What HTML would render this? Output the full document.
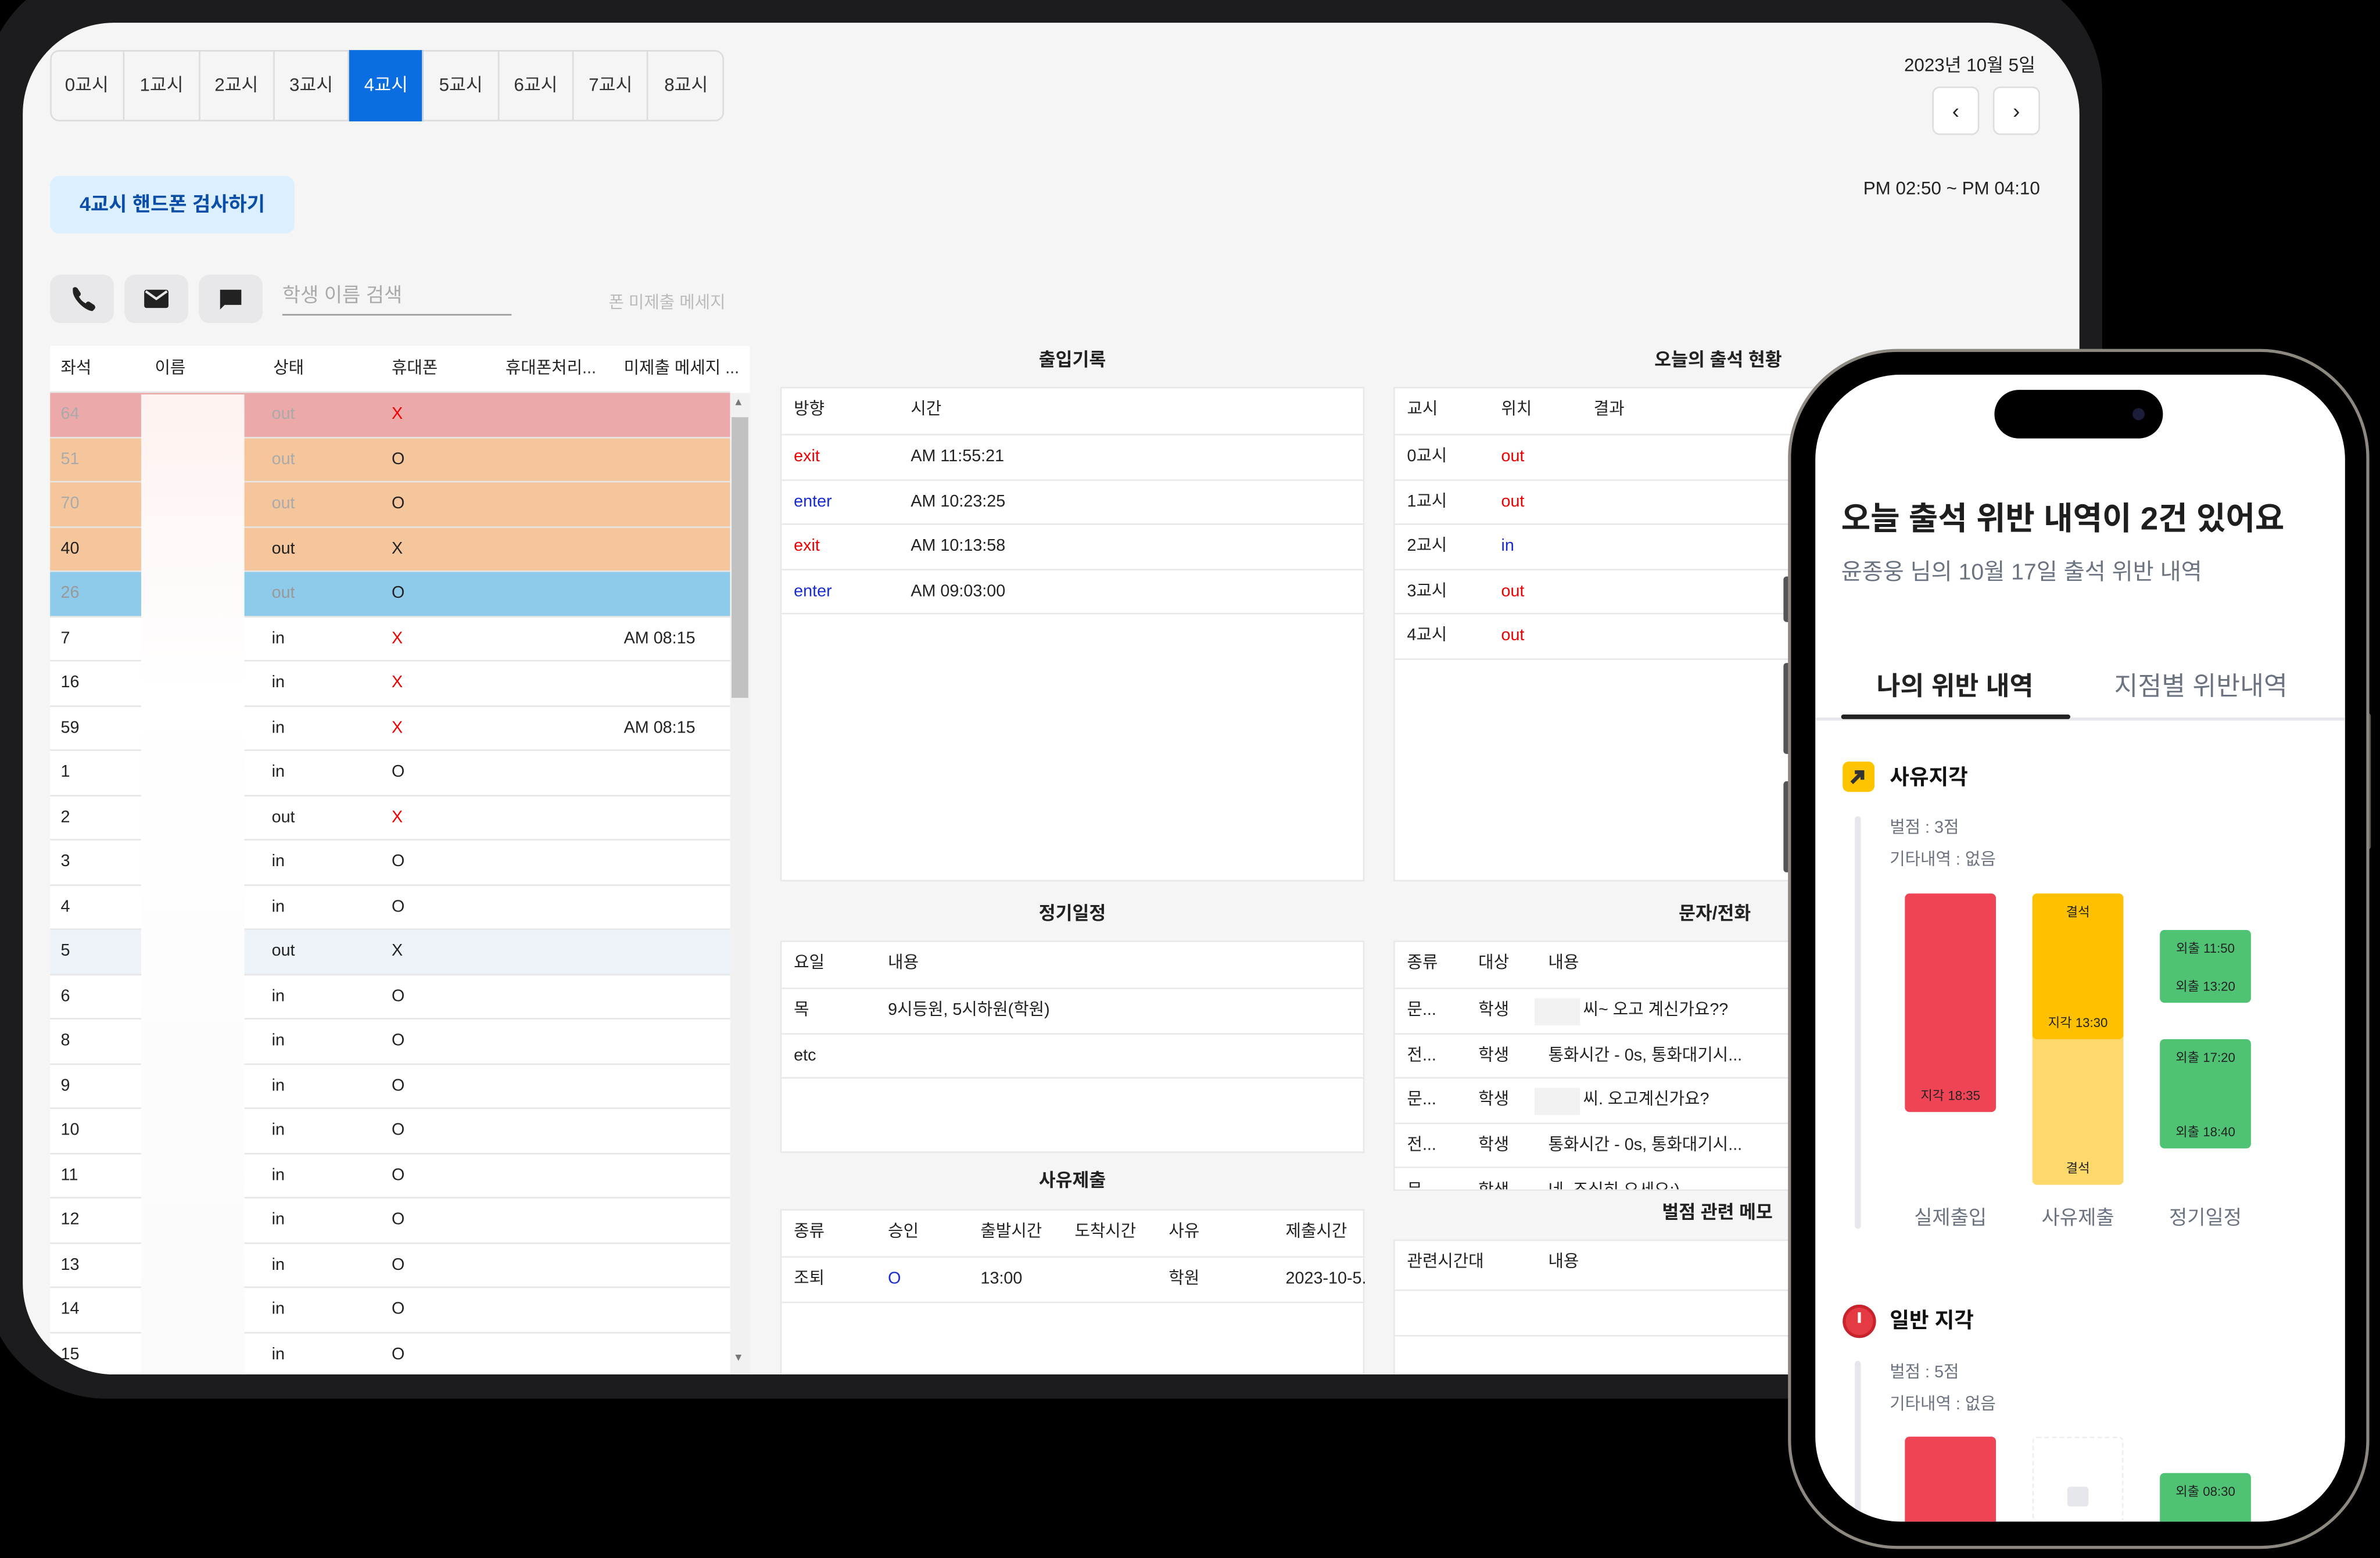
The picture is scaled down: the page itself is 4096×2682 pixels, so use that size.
<!DOCTYPE html>
<html><head><meta charset="utf-8">
<style>
*{margin:0;padding:0;box-sizing:border-box}
html,body{width:4096px;height:2682px;overflow:hidden;background:#000}
#w{position:absolute;left:0;top:0;width:1568px;height:1027px;transform:scale(2.6122,2.6115);transform-origin:0 0;font-family:"Liberation Sans","Noto Sans CJK KR",sans-serif;color:#222;font-size:11px}
.a{position:absolute;white-space:nowrap}
.tab{position:absolute;top:33px;height:47px;width:49.3px;border-right:1px solid #dcdcdc;text-align:center;line-height:47px;font-size:12px;color:#333}
.ib{position:absolute;top:181px;width:42px;height:32px;background:#e8e8eb;border-radius:7px}
.row{position:absolute;left:33px;width:448px;height:29.5px;border-bottom:1px solid #e6e6e6;font-size:11px}
.row span{position:absolute;top:0;line-height:29px}
.pan{position:absolute;background:#fff;border:1px solid #e8e8e8}
.pr{position:absolute;left:0;right:0;height:29.5px;border-bottom:1px solid #e8e8e8;font-size:11px}
.pr span{position:absolute;line-height:29px}
.tt{position:absolute;font-size:12px;font-weight:bold;color:#222;text-align:center}
.r{color:#e00}.b{color:#1a2bd0}
.bar{position:absolute;border-radius:3px;font-size:8.5px;color:#222;text-align:center}
.bar span{position:absolute;left:0;right:0}
</style></head><body><div id="w">
<!-- tablet -->
<div class="a" style="left:-10px;top:-20px;width:1395px;height:942px;background:#1c1c1e;border-radius:80px"></div>
<div class="a" style="left:15px;top:15px;width:1355px;height:891px;background:#f5f5f5;border-radius:60px;overflow:hidden">
<div style="position:absolute;left:-15px;top:-15px;width:1568px;height:1027px">
<div class="a" style="left:33px;top:33px;width:444px;height:47px;border:1px solid #dcdcdc;border-radius:6px;background:#f5f5f5"></div>
<div class="tab" style="left:33px">0교시</div><div class="tab" style="left:82.3px">1교시</div><div class="tab" style="left:131.6px">2교시</div><div class="tab" style="left:180.9px">3교시</div><div class="tab" style="left:230.2px;background:#0a6de0;color:#fff">4교시</div><div class="tab" style="left:279.5px">5교시</div><div class="tab" style="left:328.8px">6교시</div><div class="tab" style="left:378.1px">7교시</div><div class="tab" style="left:427.4px;border:none">8교시</div>
<div class="a" style="right:227px;top:34px;font-size:12px">2023년 10월 5일</div>
<div class="a" style="left:1273px;top:57px;width:31px;height:32px;background:#fff;border:1px solid #ddd;border-radius:5px;text-align:center;line-height:30px;font-size:14px">&#8249;</div>
<div class="a" style="left:1313px;top:57px;width:31px;height:32px;background:#fff;border:1px solid #ddd;border-radius:5px;text-align:center;line-height:30px;font-size:14px">&#8250;</div>
<div class="a" style="left:33px;top:116px;width:161px;height:38px;background:#dcefff;border-radius:6px;color:#0a4ea8;font-weight:bold;font-size:13px;text-align:center;line-height:38px">4교시 핸드폰 검사하기</div>
<div class="a" style="right:224px;top:117px;font-size:12px">PM 02:50 ~ PM 04:10</div>
<div class="ib" style="left:33px"><svg width="42" height="32" viewBox="0 0 42 32"><path d="M15 9c1-1 2-1 3 0l2 3c.5 1 0 2-1 2.5c1 2 2.5 3.5 4.5 4.5c.5-1 1.5-1.5 2.5-1l3 2c1 1 1 2 0 3l-1 1c-5 0-13-8-13-13z" fill="#222"/></svg></div>
<div class="ib" style="left:82px"><svg width="42" height="32" viewBox="0 0 42 32"><rect x="13" y="10" width="16" height="12" rx="1.5" fill="#222"/><path d="M14 11l7 5l7-5" stroke="#e8e8eb" stroke-width="1.6" fill="none"/></svg></div>
<div class="ib" style="left:131px"><svg width="42" height="32" viewBox="0 0 42 32"><path d="M14 10h14v10h-11l-3 3z" fill="#222"/></svg></div>
<div class="a" style="left:186px;top:184px;width:151px;height:24px;border-bottom:1px solid #999;color:#aaa;font-size:13px">학생 이름 검색</div>
<div class="a" style="left:401px;top:191px;color:#bbb;font-size:11px">폰 미제출 메세지</div>
<!-- left table -->
<div class="a" style="left:33px;top:228px;width:461px;height:678px;background:#fff"></div>
<div class="row" style="top:228px;height:31px;background:#fff"><span style="left:7px;line-height:30px">좌석</span><span style="left:69px;line-height:30px">이름</span><span style="left:147px;line-height:30px">상태</span><span style="left:225px;line-height:30px">휴대폰</span><span style="left:300px;line-height:30px">휴대폰처리...</span><span style="left:378px;line-height:30px">미제출 메세지 ...</span></div>
<div class="row" style="top:259px;background:#eba9a9;color:#aaa"><span style="left:7px">64</span><span style="left:146px">out</span><span style="left:225px" class="r">X</span></div>
<div class="row" style="top:288.5px;background:#f5c59b;color:#aaa"><span style="left:7px">51</span><span style="left:146px">out</span><span style="left:225px;color:#222">O</span></div>
<div class="row" style="top:318px;background:#f5c59b;color:#aaa"><span style="left:7px">70</span><span style="left:146px">out</span><span style="left:225px;color:#222">O</span></div>
<div class="row" style="top:347.5px;background:#f5c59b"><span style="left:7px">40</span><span style="left:146px">out</span><span style="left:225px">X</span></div>
<div class="row" style="top:377px;background:#8ecaea;color:#999"><span style="left:7px">26</span><span style="left:146px">out</span><span style="left:225px;color:#222">O</span></div>
<div class="row" style="top:406.5px"><span style="left:7px">7</span><span style="left:146px">in</span><span style="left:225px" class="r">X</span><span style="left:378px">AM 08:15</span></div>
<div class="row" style="top:436px"><span style="left:7px">16</span><span style="left:146px">in</span><span style="left:225px" class="r">X</span></div>
<div class="row" style="top:465.5px"><span style="left:7px">59</span><span style="left:146px">in</span><span style="left:225px" class="r">X</span><span style="left:378px">AM 08:15</span></div>
<div class="row" style="top:495px"><span style="left:7px">1</span><span style="left:146px">in</span><span style="left:225px">O</span></div>
<div class="row" style="top:524.5px"><span style="left:7px">2</span><span style="left:146px">out</span><span style="left:225px" class="r">X</span></div>
<div class="row" style="top:554px"><span style="left:7px">3</span><span style="left:146px">in</span><span style="left:225px">O</span></div>
<div class="row" style="top:583.5px"><span style="left:7px">4</span><span style="left:146px">in</span><span style="left:225px">O</span></div>
<div class="row" style="top:613px;background:#eef3fa"><span style="left:7px">5</span><span style="left:146px">out</span><span style="left:225px">X</span></div>
<div class="row" style="top:642.5px"><span style="left:7px">6</span><span style="left:146px">in</span><span style="left:225px">O</span></div>
<div class="row" style="top:672px"><span style="left:7px">8</span><span style="left:146px">in</span><span style="left:225px">O</span></div>
<div class="row" style="top:701.5px"><span style="left:7px">9</span><span style="left:146px">in</span><span style="left:225px">O</span></div>
<div class="row" style="top:731px"><span style="left:7px">10</span><span style="left:146px">in</span><span style="left:225px">O</span></div>
<div class="row" style="top:760.5px"><span style="left:7px">11</span><span style="left:146px">in</span><span style="left:225px">O</span></div>
<div class="row" style="top:790px"><span style="left:7px">12</span><span style="left:146px">in</span><span style="left:225px">O</span></div>
<div class="row" style="top:819.5px"><span style="left:7px">13</span><span style="left:146px">in</span><span style="left:225px">O</span></div>
<div class="row" style="top:849px"><span style="left:7px">14</span><span style="left:146px">in</span><span style="left:225px">O</span></div>
<div class="row" style="top:878.5px"><span style="left:7px">15</span><span style="left:146px">in</span><span style="left:225px">O</span></div>
<div class="a" style="left:93px;top:260px;width:68px;height:646px;background:linear-gradient(#fdf2f0,#fff 30%,#fafafa)"></div>
<div class="a" style="left:481px;top:259px;width:13px;height:647px;background:#f1f1f1"></div>
<div class="a" style="left:482px;top:275px;width:11px;height:185px;background:#c1c1c1"></div>
<div class="a" style="left:483px;top:262px;font-size:7px;color:#777">▲</div>
<div class="a" style="left:483px;top:892px;font-size:7px;color:#777">▼</div>
<!-- middle -->
<div class="tt" style="left:514px;width:385px;top:228px">출입기록</div>
<div class="pan" style="left:514px;top:255px;width:385px;height:326px">
<div class="pr" style="top:0;height:31px"><span style="left:8px">방향</span><span style="left:85px">시간</span></div>
<div class="pr" style="top:31px"><span style="left:8px" class="r">exit</span><span style="left:85px">AM 11:55:21</span></div>
<div class="pr" style="top:60.5px"><span style="left:8px" class="b">enter</span><span style="left:85px">AM 10:23:25</span></div>
<div class="pr" style="top:90px"><span style="left:8px" class="r">exit</span><span style="left:85px">AM 10:13:58</span></div>
<div class="pr" style="top:119.5px"><span style="left:8px" class="b">enter</span><span style="left:85px">AM 09:03:00</span></div>
</div>
<div class="tt" style="left:514px;width:385px;top:593px">정기일정</div>
<div class="pan" style="left:514px;top:620px;width:385px;height:140px">
<div class="pr" style="top:0;height:31px"><span style="left:8px">요일</span><span style="left:70px">내용</span></div>
<div class="pr" style="top:31px"><span style="left:8px">목</span><span style="left:70px">9시등원, 5시하원(학원)</span></div>
<div class="pr" style="top:60.5px"><span style="left:8px">etc</span></div>
</div>
<div class="tt" style="left:514px;width:385px;top:769px">사유제출</div>
<div class="pan" style="left:514px;top:797px;width:385px;height:120px">
<div class="pr" style="top:0;height:31px"><span style="left:8px">종류</span><span style="left:70px">승인</span><span style="left:131px">출발시간</span><span style="left:193px">도착시간</span><span style="left:255px">사유</span><span style="left:332px">제출시간</span></div>
<div class="pr" style="top:31px"><span style="left:8px">조퇴</span><span style="left:70px" class="b">O</span><span style="left:131px">13:00</span><span style="left:255px">학원</span><span style="left:332px">2023-10-5.</span></div>
</div>
<!-- right -->
<div class="tt" style="left:1090px;top:228px">오늘의 출석 현황</div>
<div class="pan" style="left:918px;top:255px;width:300px;height:326px">
<div class="pr" style="top:0;height:31px"><span style="left:8px">교시</span><span style="left:70px">위치</span><span style="left:131px">결과</span></div>
<div class="pr" style="top:31px"><span style="left:8px">0교시</span><span style="left:70px" class="r">out</span></div>
<div class="pr" style="top:60.5px"><span style="left:8px">1교시</span><span style="left:70px" class="r">out</span></div>
<div class="pr" style="top:90px"><span style="left:8px">2교시</span><span style="left:70px" class="b">in</span></div>
<div class="pr" style="top:119.5px"><span style="left:8px">3교시</span><span style="left:70px" class="r">out</span></div>
<div class="pr" style="top:149px"><span style="left:8px">4교시</span><span style="left:70px" class="r">out</span></div>
</div>
<div class="tt" style="left:1106px;top:593px">문자/전화</div>
<div class="pan" style="left:918px;top:620px;width:300px;height:165px;overflow:hidden">
<div class="pr" style="top:0;height:31px"><span style="left:8px">종류</span><span style="left:55px">대상</span><span style="left:101px">내용</span></div>
<div class="pr" style="top:31px"><span style="left:8px">문...</span><span style="left:55px">학생</span><span style="left:92px;width:30px;height:18px;top:6px;background:#f2f2f2"></span><span style="left:124px">씨~ 오고 계신가요??</span></div>
<div class="pr" style="top:60.5px"><span style="left:8px">전...</span><span style="left:55px">학생</span><span style="left:101px">통화시간 - 0s, 통화대기시...</span></div>
<div class="pr" style="top:90px"><span style="left:8px">문...</span><span style="left:55px">학생</span><span style="left:92px;width:30px;height:18px;top:6px;background:#f2f2f2"></span><span style="left:124px">씨. 오고계신가요?</span></div>
<div class="pr" style="top:119.5px"><span style="left:8px">전...</span><span style="left:55px">학생</span><span style="left:101px">통화시간 - 0s, 통화대기시...</span></div>
<div class="pr" style="top:149px"><span style="left:8px;top:1px">문</span><span style="left:55px;top:1px">학생</span><span style="left:101px;top:1px">네, 조심히 오세요:)</span></div>
</div>
<div class="tt" style="left:1095px;top:790px">벌점 관련 메모</div>
<div class="pan" style="left:918px;top:817px;width:300px;height:100px">
<div class="pr" style="top:0;height:33px"><span style="left:8px">관련시간대</span><span style="left:101px">내용</span></div>
<div class="pr" style="top:33px"></div>
</div>
</div></div>
<!-- phone -->
<div class="a" style="left:1175px;top:380px;width:5px;height:30px;background:#555;border-radius:2px"></div>
<div class="a" style="left:1175px;top:437px;width:5px;height:60px;background:#555;border-radius:2px"></div>
<div class="a" style="left:1175px;top:515px;width:5px;height:60px;background:#555;border-radius:2px"></div>
<div class="a" style="left:1558px;top:470px;width:4px;height:90px;background:#555;border-radius:2px"></div>
<div class="a" style="left:1178px;top:230px;width:383px;height:791px;background:#000;border-radius:72px;border:2.5px solid #8d8880"></div>
<div class="a" style="left:1196px;top:247px;width:349px;height:756px;background:#fff;border-radius:56px;overflow:hidden">
<div style="position:absolute;left:-1196px;top:-247px;width:1568px;height:1027px">
<div class="a" style="left:1314px;top:257px;width:111px;height:32px;background:#000;border-radius:16px"></div>
<div class="a" style="left:1405px;top:269px;width:8px;height:8px;background:#1b1d3a;border-radius:50%"></div>
<div class="a" style="left:1213px;top:326px;font-size:21px;font-weight:bold;color:#1e1e1e">오늘 출석 위반 내역이 2건 있어요</div>
<div class="a" style="left:1213px;top:366px;font-size:15px;color:#6b7280">윤종웅 님의 10월 17일 출석 위반 내역</div>
<div class="a" style="left:1213px;top:438px;width:150px;text-align:center;font-size:17px;font-weight:bold;color:#222">나의 위반 내역</div>
<div class="a" style="left:1375px;top:438px;width:150px;text-align:center;font-size:17px;color:#6b7280">지점별 위반내역</div>
<div class="a" style="left:1196px;top:473px;width:349px;height:1.5px;background:#e5e7eb"></div>
<div class="a" style="left:1213px;top:471px;width:151px;height:3px;background:#222;border-radius:2px"></div>
<div class="a" style="left:1214px;top:502px;width:21px;height:20px;background:#ffc400;border-radius:4px"><svg width="21" height="20" viewBox="0 0 21 20"><path d="M6 14l6-6M8 7h5v5" stroke="#333" stroke-width="2.5" fill="none"/></svg></div>
<div class="a" style="left:1245px;top:502px;font-size:14px;font-weight:bold;color:#111">사유지각</div>
<div class="a" style="left:1222px;top:538px;width:4px;height:272px;background:#e5e7eb;border-radius:2px"></div>
<div class="a" style="left:1245px;top:537px;font-size:11px;color:#6b7280">벌점 : 3점</div>
<div class="a" style="left:1245px;top:558px;font-size:11px;color:#6b7280">기타내역 : 없음</div>
<div class="bar" style="left:1255px;top:589px;width:60px;height:144px;background:#ef4455"><span style="bottom:5px">지각 18:35</span></div>
<div class="bar" style="left:1339px;top:589px;width:60px;height:192px;background:#fdd96b"><span style="bottom:5px">결석</span></div>
<div class="bar" style="left:1339px;top:589px;width:60px;height:96px;background:#ffc000"><span style="top:6px">결석</span><span style="bottom:5px">지각 13:30</span></div>
<div class="bar" style="left:1423px;top:613px;width:60px;height:48px;background:#4fc274"><span style="top:6px">외출 11:50</span><span style="bottom:5px">외출 13:20</span></div>
<div class="bar" style="left:1423px;top:685px;width:60px;height:72px;background:#4fc274"><span style="top:6px">외출 17:20</span><span style="bottom:5px">외출 18:40</span></div>
<div class="a" style="left:1255px;top:792px;width:60px;text-align:center;font-size:13px;color:#6b7280">실제출입</div>
<div class="a" style="left:1339px;top:792px;width:60px;text-align:center;font-size:13px;color:#6b7280">사유제출</div>
<div class="a" style="left:1423px;top:792px;width:60px;text-align:center;font-size:13px;color:#6b7280">정기일정</div>
<div class="a" style="left:1214px;top:860px;width:22px;height:22px;background:#e43a44;border-radius:50%;border:2px solid #c8222c"><div style="position:absolute;left:8px;top:3px;width:2px;height:7px;background:#fff"></div></div>
<div class="a" style="left:1245px;top:860px;font-size:14px;font-weight:bold;color:#111">일반 지각</div>
<div class="a" style="left:1222px;top:897px;width:4px;height:120px;background:#e5e7eb;border-radius:2px"></div>
<div class="a" style="left:1245px;top:896px;font-size:11px;color:#6b7280">벌점 : 5점</div>
<div class="a" style="left:1245px;top:917px;font-size:11px;color:#6b7280">기타내역 : 없음</div>
<div class="bar" style="left:1255px;top:947px;width:60px;height:80px;background:#ef4455"></div>
<div class="bar" style="left:1339px;top:947px;width:60px;height:80px;border:1px dashed #eee"></div>
<div class="a" style="left:1362px;top:980px;width:14px;height:13px;background:#e5e7eb;border-radius:2px"></div>
<div class="bar" style="left:1423px;top:971px;width:60px;height:60px;background:#4fc274"><span style="top:6px">외출 08:30</span></div>
</div></div>
</div></body></html>
